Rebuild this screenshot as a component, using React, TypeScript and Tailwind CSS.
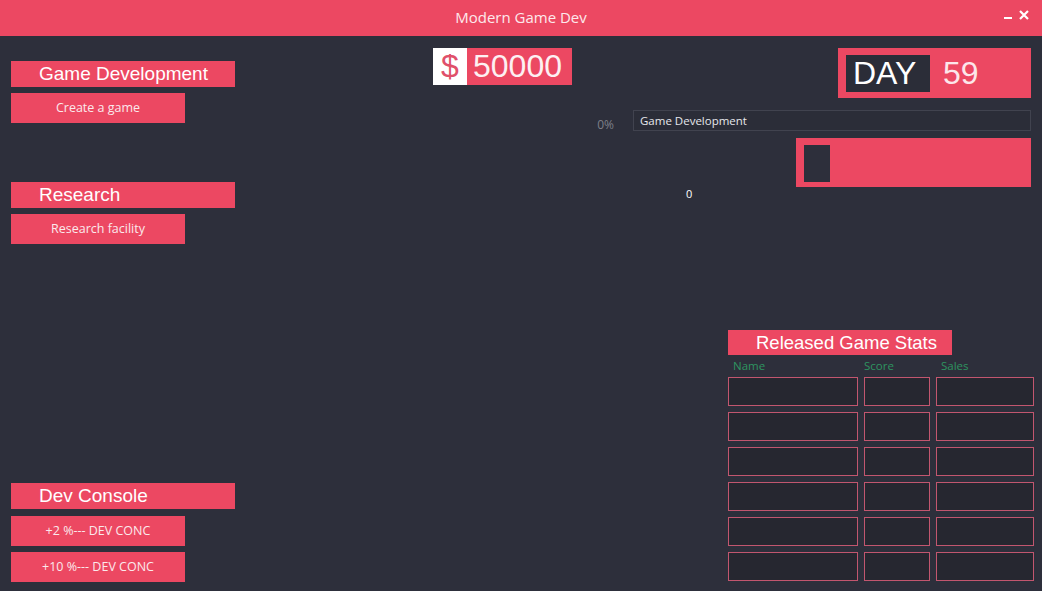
const RED = "bg-[#ec4862]";

function SectionHeader({ title }: { title: string }) {
  return (
    <div className={`${RED} h-[26px] w-[224px] pl-[28px] text-[19px] leading-[26px] text-white font-['Liberation_Sans',Arial,sans-serif]`}>
      {title}
    </div>
  );
}

function ActionButton({ label, className = "" }: { label: string; className?: string }) {
  return (
    <button
      className={`${RED} h-[30px] w-[174px] text-[12.5px] text-[#fbe9ec] font-['Open_Sans','Noto_Sans',sans-serif] ${className}`}
    >
      {label}
    </button>
  );
}

const rows = [0, 1, 2, 3, 4, 5];

export default function App() {
  return (
    <div className="w-[1042px] h-[591px] bg-[#2d2f3b] flex flex-col overflow-hidden font-['Open_Sans','Noto_Sans',sans-serif]">
      {/* title bar */}
      <div className={`${RED} h-[36px] shrink-0 flex items-center relative`}>
        <div className="flex-1 text-center text-[15px] text-[#fde8ec] -mt-[1px]">Modern Game Dev</div>
        <div className="absolute right-[13px] top-[10px] flex items-end gap-[7px]">
          <div className="w-[8px] h-[2px] bg-white mb-[1px]" />
          <svg width="10" height="10" viewBox="0 0 10 10">
            <path d="M1 1 L9 9 M9 1 L1 9" stroke="#fff" strokeWidth="2.2" />
          </svg>
        </div>
      </div>

      <div className="flex flex-1">
        {/* left column */}
        <div className="w-[224px] ml-[11px] pt-[25px] flex flex-col items-start">
          <SectionHeader title="Game Development" />
          <ActionButton label="Create a game" className="mt-[6px]" />
          <div className="mt-[59px]">
            <SectionHeader title="Research" />
          </div>
          <ActionButton label="Research facility" className="mt-[6px]" />
          <div className="mt-[239px]">
            <SectionHeader title="Dev Console" />
          </div>
          <ActionButton label="+2 %--- DEV CONC" className="mt-[7px]" />
          <ActionButton label="+10 %--- DEV CONC" className="mt-[6px]" />
        </div>

        {/* right area */}
        <div className="flex-1 flex flex-col pt-[12px] pr-[11px]">
          <div className="flex items-start justify-between">
            <div className="ml-[198px] flex h-[37px] font-['Liberation_Sans',Arial,sans-serif] text-[32px] leading-[37px]">
              <div className="w-[34px] bg-white text-[#e0506a] text-center">$</div>
              <div className={`${RED} w-[105px] pl-[6px] text-[#fdf0f2]`}>50000</div>
            </div>
            <div className={`${RED} w-[193px] h-[50px] pt-[7px] pl-[8px] flex items-start font-['Liberation_Sans',Arial,sans-serif] text-[32px] leading-[37px]`}>
              <div className="w-[84px] h-[37px] bg-[#2b2d38] text-white pl-[7px]">DAY</div>
              <div className="ml-[13px] text-[#fce6ea]">59</div>
            </div>
          </div>

          <div className="mt-[12px] h-[21px] flex items-end justify-end">
            <span className="text-[12px] leading-[14px] text-[#7d7f89] -mb-[1px]">0%</span>
            <div className="ml-[19px] w-[398px] h-[21px] border border-[#41434f] bg-[#2b2d38] pl-[6px] text-[11.5px] leading-[19px] text-[#e6e8ec]">
              Game Development
            </div>
          </div>

          <div className={`${RED} mt-[7px] self-end w-[235px] h-[49px] pt-[7px] pl-[8px]`}>
            <div className="w-[26px] h-[37px] bg-[#2d2f3b]" />
          </div>

          <div className="ml-[451px] text-[11px] leading-[14px] text-white">0</div>

          {/* released game stats */}
          <div className="ml-[493px] mt-[129px] -mr-[3px]">
            <div className={`${RED} h-[25px] w-[224px] pl-[28px] text-[18.5px] leading-[25px] text-white font-['Liberation_Sans',Arial,sans-serif]`}>
              Released Game Stats
            </div>
            <div className="grid grid-cols-[130px_66px_98px] gap-x-[6px] h-[22px] items-center text-[11.5px] text-[#2e9460]">
              <span className="pl-[5px]">Name</span>
              <span>Score</span>
              <span className="pl-[5px]">Sales</span>
            </div>
            <div className="grid grid-cols-[130px_66px_98px] gap-x-[6px] gap-y-[6px]">
              {rows.map((r) => (
                <div key={r} className="contents">
                  <div className="h-[29px] border border-[#c2566f] bg-[#262730]" />
                  <div className="h-[29px] border border-[#c2566f] bg-[#262730]" />
                  <div className="h-[29px] border border-[#c2566f] bg-[#262730]" />
                </div>
              ))}
            </div>
          </div>
        </div>
      </div>
    </div>
  );
}
